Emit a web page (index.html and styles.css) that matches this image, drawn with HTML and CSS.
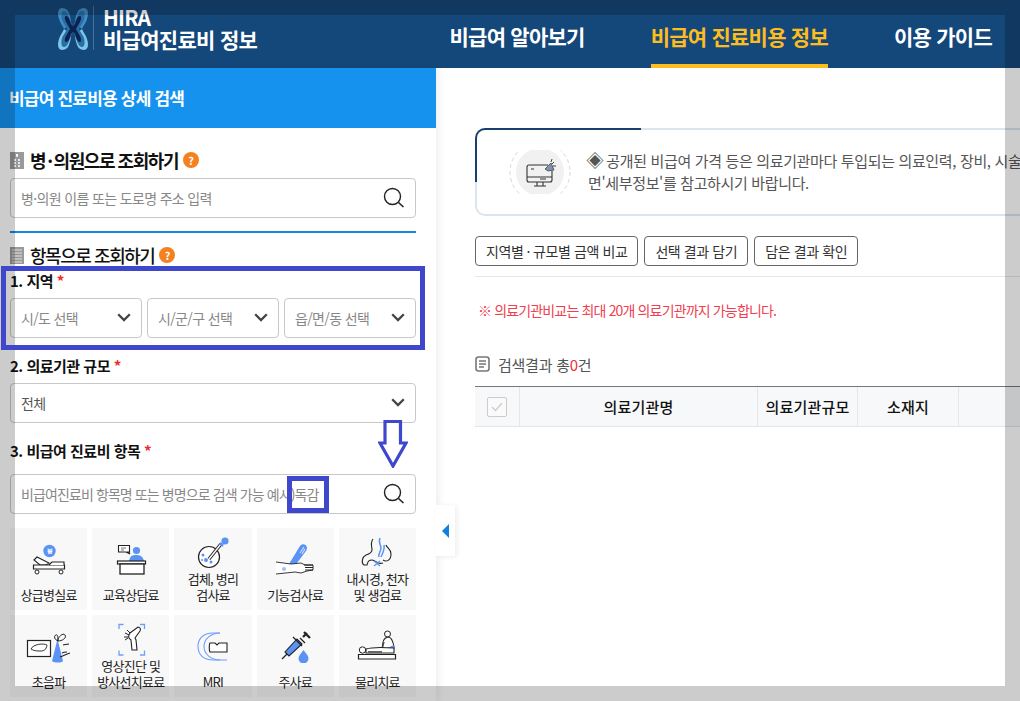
FILE: index.html
```html
<!DOCTYPE html>
<html lang="ko">
<head>
<meta charset="utf-8">
<title>HIRA 비급여진료비 정보</title>
<link rel="stylesheet" href="styles.css">
</head>
<body>
<div class="page">
  <header class="header">
    <div class="brand">
      <svg class="brand-logo" viewBox="0 0 30 44" width="30" height="44">
        <g id="lobes">
          <path d="M4 1C0 1-1 6 1 12c1 4 4 7 5 10 2-2 4-2 6-4 2-3 0-10-2-14C9 2 6 1 4 1Z" fill="#3f8fc4"/>
          <path d="M26 1c4 0 5 5 3 11-1 4-4 7-5 10-2-2-4-2-6-4-2-3 0-10 2-14 1-2 4-3 6-3Z" fill="#3f8fc4"/>
          <path d="M4 43c-4 0-5-5-3-11 1-4 4-7 5-10 2 2 4 2 6 4 2 3 0 10-2 14-1 2-4 3-6 3Z" fill="#7cc6e8"/>
          <path d="M26 43c4 0 5-5 3-11-1-4-4-7-5-10-2 2-4 2-6 4-2 3 0 10 2 14 1 2 4 3 6 3Z" fill="#7cc6e8"/>
          <path d="M6 4c-3 0-3 5-2 9 1 3 4 6 5 9-1 3-4 6-5 9-1 4-1 9 2 9 3 0 5-5 6-9l3-6 3 6c1 4 3 9 6 9s3-5 2-9c-1-3-4-6-5-9 1-3 4-6 5-9 1-4 1-9-2-9-3 0-5 5-6 9l-3 6-3-6C11 9 9 4 6 4Z" fill="#2a6ea6"/>
          <path d="M8 9c-2 0-1 4 0 6l4 7-4 7c-1 2-2 6 0 6 3 0 4-5 5-8l2-2 2 2c1 3 2 8 5 8 2 0 1-4 0-6l-4-7 4-7c1-2 2-6 0-6-3 0-4 5-5 8l-2 2-2-2C12 14 11 9 8 9Z" fill="#0b2350"/>
        </g>
      </svg>
      <div class="brand-text">
        <span class="brand-top">HIRA</span>
        <span class="brand-name">비급여진료비 정보</span>
      </div>
    </div>
    <nav class="nav">
      <a class="nav-item">비급여 알아보기</a>
      <a class="nav-item is-active">비급여 진료비용 정보</a>
      <a class="nav-item">이용 가이드</a>
    </nav>
  </header>

  <div class="content">
    <aside class="side">
      <h2 class="side-head">비급여 진료비용 상세 검색</h2>
      <div class="side-body">
        <h3 class="sec-title sec-first">
          <svg class="sec-icon" viewBox="0 0 14 17" width="14" height="17"><rect width="14" height="17" fill="#9a9a9a"/><path d="M6 3h2M7 2v3M4 8h2M8 8h2M4 11h2M8 11h2M4 14h2M8 14h2" stroke="#fff" stroke-width="1.4"/></svg>
          <span>병<span class="dot">·</span>의원으로 조회하기</span>
          <span class="help">?</span>
        </h3>
        <div class="field field-search">
          <span class="ph">병·의원 이름 또는 도로명 주소 입력</span>
          <svg class="search" viewBox="0 0 22 22" width="22" height="22"><circle cx="9.5" cy="9.5" r="8" fill="none" stroke="#222" stroke-width="1.4"/><path d="M15.5 15.5l5 4.5" stroke="#222" stroke-width="1.6"/></svg>
        </div>
        <div class="rule"></div>
        <h3 class="sec-title sec-second">
          <svg class="sec-icon" viewBox="0 0 14 17" width="14" height="17"><rect width="14" height="17" fill="#9a9a9a"/><path d="M2 3h10M2 6h10M2 9h10M2 12h10M2 15h10" stroke="#e2e2e2" stroke-width="1.2"/></svg>
          <span>항목으로 조회하기</span>
          <span class="help">?</span>
        </h3>

        <div class="label label-first">1. 지역 <em>*</em></div>
        <div class="select-row">
          <div class="field field-select"><span class="ph">시/도 선택</span><svg class="chev" viewBox="0 0 14 9" width="14" height="9"><path d="M1.2 1.2 7 7l5.8-5.8" fill="none" stroke="#444" stroke-width="2.3"/></svg></div>
          <div class="field field-select"><span class="ph">시/군/구 선택</span><svg class="chev" viewBox="0 0 14 9" width="14" height="9"><path d="M1.2 1.2 7 7l5.8-5.8" fill="none" stroke="#444" stroke-width="2.3"/></svg></div>
          <div class="field field-select"><span class="ph">읍/면/동 선택</span><svg class="chev" viewBox="0 0 14 9" width="14" height="9"><path d="M1.2 1.2 7 7l5.8-5.8" fill="none" stroke="#444" stroke-width="2.3"/></svg></div>
        </div>

        <div class="label">2. 의료기관 규모 <em>*</em></div>
        <div class="field field-select field-gap"><span class="val">전체</span><svg class="chev" viewBox="0 0 14 9" width="14" height="9"><path d="M1.2 1.2 7 7l5.8-5.8" fill="none" stroke="#444" stroke-width="2.3"/></svg></div>

        <div class="label">3. 비급여 진료비 항목 <em>*</em></div>
        <div class="field field-search field-gap-lg">
          <span class="ph ph-tight">비급여진료비 항목명 또는 병명으로 검색 가능 예시)독감</span>
          <svg class="search" viewBox="0 0 22 22" width="22" height="22"><circle cx="9.5" cy="9.5" r="8" fill="none" stroke="#222" stroke-width="1.4"/><path d="M15.5 15.5l5 4.5" stroke="#222" stroke-width="1.6"/></svg>
        </div>

        <div class="tiles">
          <div class="tile">
            <svg class="tile-icon" viewBox="0 0 48 44" width="48" height="44">
              <circle cx="24.5" cy="19" r="6.2" fill="#5b93f5"/><text x="24.5" y="21.6" class="won">₩</text>
              <path d="M9 28l3-3 12 6-3 2h-6z" fill="#fff" stroke="#222" stroke-width="1.1"/>
              <path d="M8.5 33h31v4h-31z" fill="#fff" stroke="#222" stroke-width="1.2"/><path d="M24 33l3-3h12v3" fill="#fff" stroke="#222" stroke-width="1.1"/>
              <circle cx="12" cy="40" r="2" fill="#fff" stroke="#222"/><circle cx="36" cy="40" r="2" fill="#fff" stroke="#222"/>
            </svg>
            <span>상급병실료</span>
          </div>
          <div class="tile">
            <svg class="tile-icon" viewBox="0 0 48 44" width="48" height="44">
              <path d="M11.500 13.500h11v6.500h-1.500l2 2-4-2h-7.500z" fill="#fff" stroke="#222" stroke-width="1.1"/><path d="M14 16h5M14 18h3" stroke="#777"/>
              <circle cx="29.500" cy="18.500" r="3.600" fill="#5b93f5"/><path d="M22 29c1-4 2-6 7-6 5 0 7 2 8 6z" fill="#5b93f5"/>
              <rect x="10.500" y="29" width="28" height="3" fill="#fff" stroke="#222" stroke-width="1.2"/><rect x="13" y="32" width="24" height="10" fill="#fff" stroke="#222" stroke-width="1.3"/>
            </svg>
            <span>교육상담료</span>
          </div>
          <div class="tile">
            <svg class="tile-icon" viewBox="0 0 48 44" width="48" height="44">
              <circle cx="20" cy="25" r="10.500" fill="#fff" stroke="#222" stroke-width="1.2"/>
              <circle cx="14" cy="23" r="1.500" fill="#5b93f5"/><circle cx="17" cy="28" r="2" fill="#5b93f5"/><circle cx="22" cy="30" r="1.500" fill="#5b93f5"/><circle cx="13" cy="28" r="1" fill="#5b93f5"/>
              <path d="M20 27l12-15" stroke="#222" stroke-width="3.400"/><path d="M20 27l12-15" stroke="#fff" stroke-width="1.400"/>
              <circle cx="36" cy="9" r="3.600" fill="#5b93f5"/><path d="M31 11l3 3" stroke="#5b93f5" stroke-width="2.500"/>
            </svg>
            <span>검체, 병리<br>검사료</span>
          </div>
          <div class="tile">
            <svg class="tile-icon" viewBox="0 0 48 44" width="48" height="44">
              <path d="M18 32l11-18c2-3 7-2 7 2 0 1-1 3-1 3L23 35z" fill="#5b93f5"/><path d="M29 21l4-6M31 22l3-5" stroke="#cfe0ff" stroke-width="1.100"/>
              <path d="M5 30l15 2 10-1 4 2h8v5l-6 1-6 2-6-1-19 2" fill="#fff" stroke="#222" stroke-width=".9"/>
              <path d="M33 33h9M34 35.500h8M34 38h8" stroke="#222" stroke-width="1.200"/><circle cx="13" cy="37" r="2" fill="#9cc0fb"/>
            </svg>
            <span>기능검사료</span>
          </div>
          <div class="tile">
            <svg class="tile-icon" viewBox="0 0 48 44" width="48" height="44">
              <path d="M20 7c-3 4-1 8-1 11 0 3-3 4-6 5-4 2-5 8-2 10M30 28c3 2 8 1 8-6 0-5-4-6-5-9" fill="none" stroke="#222" stroke-width="1.100"/>
              <path d="M11 33l3 0c1-5 3-5 5-5 4 0 5 5 11 3" fill="none" stroke="#222" stroke-width="1.100"/>
              <path d="M27 6c-2 4 1 7 1 10 0 4-3 5-2 9M31 13c1 4-1 8-3 12" fill="none" stroke="#5b93f5" stroke-width="1.500"/>
              <path d="M21 29l6 5M27 29l-6 5" stroke="#5b93f5" stroke-width="1.200"/>
            </svg>
            <span>내시경, 천자<br>및 생검료</span>
          </div>
          <div class="tile">
            <svg class="tile-icon" viewBox="0 0 48 44" width="48" height="44">
              <rect x="2.500" y="21.500" width="23" height="16" fill="#fff" stroke="#222" stroke-width="1.200"/><path d="M6 30c2-5 13-6 16-4-1 5-3 6-6 6-4 0-7 0-10-2z" fill="none" stroke="#333"/>
              <path d="M32 22h1l5 20c-1 2-9 2-11 0z" fill="#5b93f5"/>
              <path d="M33 22c-1-3 5-9 7-6 2 3-3 6-7 6zM33 22c-3-1-5-5-2-6 2-1 2 3 2 6" fill="none" stroke="#222"/>
              <path d="M38 26c2 0 3-1 6-1M35 38c3-1 6-3 10-4M37 34c2-1 3-1 5-1" fill="none" stroke="#222" stroke-width="1.100"/>
            </svg>
            <span>초음파</span>
          </div>
          <div class="tile">
            <svg class="tile-icon" viewBox="0 0 48 44" width="48" height="44">
              <path d="M12 10V5.500h4.500M33 5.500h4.500V10M12 31.500V36h4.500M33 36h4.500v-4.500" fill="none" stroke="#6f9ef8" stroke-width="1.300"/>
              <path d="M23 14l8-6c2 0 3 2 2 4l-5 7 1 2 1 10h-5l-1-10c-3-2-3-4-1-7z" fill="#fff" stroke="#222" stroke-width="1.100"/>
              <path d="M18 14l4 2M17 18l4 0M20 11l3 3M18 21l3-2" stroke="#222"/>
            </svg>
            <span>영상진단 및<br>방사선치료료</span>
          </div>
          <div class="tile">
            <svg class="tile-icon" viewBox="0 0 48 44" width="48" height="44">
              <path d="M31 14H24C14 14 9 20 9 27.500S14 41 24 41h14" fill="none" stroke="#6f9ef8" stroke-width="1.100"/>
              <path d="M31 14c-9 0-16 6-16 13.500S22 41 31 41" fill="none" stroke="#6f9ef8" stroke-width="1.100"/>
              <path d="M38 24H30l-2 2-2-2h-5c-1 1-1 8 0 9h17z" fill="#fff" stroke="#222" stroke-width="1.100"/>
            </svg>
            <span>MRI</span>
          </div>
          <div class="tile">
            <svg class="tile-icon" viewBox="0 0 48 44" width="48" height="44">
              <path d="M11 40l6-6" stroke="#222" stroke-width="1.200"/><path d="M16 35l-2-2 12-13 5 5-13 12z" fill="#5b93f5" stroke="#222" stroke-width="1.100"/>
              <path d="M22 18l9 9M29 19l5 5" stroke="#222" stroke-width="1.300"/><path d="M33 13l6 6M32 18l4-4" stroke="#222" stroke-width="2.300"/>
              <path d="M32.500 31c3 4 5 6 5 8.500a5 5 0 0 1-10 0c0-2.500 2-4.500 5-8.500z" fill="#5b93f5"/>
            </svg>
            <span>주사료</span>
          </div>
          <div class="tile">
            <svg class="tile-icon" viewBox="0 0 48 44" width="48" height="44">
              <circle cx="34.500" cy="15" r="3" fill="#fff" stroke="#222"/>
              <path d="M30 30c-1-6 0-11 5-12 3 0 5 4 6 10z" fill="#fff" stroke="#222" stroke-width="1.100"/><path d="M36 29c3-3 5-3 6-1l-1 3h-5z" fill="#5b93f5"/>
              <path d="M25 32c3-2 6-6 6-9" fill="none" stroke="#222"/>
              <circle cx="9.500" cy="31" r="3.200" fill="#fff" stroke="#222"/>
              <path d="M13 30c6-2 14-2 28-1v5H13z" fill="#fff" stroke="#222" stroke-width="1.100"/><path d="M15 33h14" stroke="#666" stroke-width="2"/>
              <path d="M5.500 35.500h37v4.500h-37z" fill="#fff" stroke="#222" stroke-width="1.200"/>
            </svg>
            <span>물리치료</span>
          </div>
        </div>
      </div>
    </aside>

    <main class="main">
      <div class="main-inner">
        <section class="notice">
          <svg class="notice-icon" viewBox="0 0 64 44" width="64" height="44">
            <circle cx="32" cy="22" r="30" fill="none" stroke="#d9d9d9" stroke-dasharray="4 3"/>
            <circle cx="32" cy="22" r="24" fill="#f1f1f1"/>
            <path d="M40 15H21a2 2 0 0 0-2 2v13a2 2 0 0 0 2 2h21a2 2 0 0 0 2-2v-9M19 27h25M29 32v4M35 32v4M26 36h12" fill="none" stroke="#333" stroke-width="1.100"/>
            <path d="M23 19h3M32 29h6" stroke="#333"/>
            <path d="M37 19l6-6 3 7-6 1z" fill="#7f93b0" stroke="#444" stroke-width=".8"/><path d="M46 12l-2 2M48 16l-3 0M44 9l-1 3" stroke="#444"/>
          </svg>
          <p class="notice-text">
            <span class="notice-line"><span class="diamond">◈</span> 공개된 비급여 가격 등은 의료기관마다 투입되는 의료인력, 장비, 시술 시간 등의 차이가 있을 수 있으므로 자세한 내용은 의료기관명을 선택하시</span>
            <span class="notice-line">면'세부정보'를 참고하시기 바랍니다.</span>
          </p>
        </section>

        <div class="actions">
          <button class="btn">지역별<span class="dot-wide">·</span>규모별 금액 비교</button>
          <button class="btn">선택 결과 담기</button>
          <button class="btn">담은 결과 확인</button>
        </div>

        <p class="warn">※ 의료기관비교는 최대 20개 의료기관까지 가능합니다.</p>

        <div class="result">
          <svg viewBox="0 0 15 16" width="15" height="16"><rect x="1" y="1" width="13" height="14" rx="2.500" fill="none" stroke="#777" stroke-width="1.600"/><path d="M4 5h7M4 8h7M4 11h5" stroke="#777" stroke-width="1.400"/></svg>
          <span>검색결과 총<b>0</b>건</span>
        </div>

        <div class="thead">
          <div class="th"><span class="check"><svg viewBox="0 0 12 10" width="12" height="10"><path d="M1 5l3.500 3.500L11 1" fill="none" stroke="#ccc" stroke-width="1.200"/></svg></span></div>
          <div class="th">의료기관명</div>
          <div class="th">의료기관규모</div>
          <div class="th">소재지</div>
          <div class="th"></div>
        </div>
      </div>
    </main>
  </div>

  <button class="toggle" aria-label="접기"></button>
  <div class="frame"></div>
  <div class="mark mark-region"></div>
  <div class="mark mark-word"></div>
  <svg class="mark-arrow" viewBox="0 0 30 48" width="30" height="48"><path d="M7 1.500h15.500V23H28L15 46 2 23h5z" fill="none" stroke="#3f48cc" stroke-width="3.200"/></svg>
</div>
</body>
</html>
```
FILE: styles.css
```css
* { box-sizing: border-box; }
html, body { margin: 0; padding: 0; height: 100%; overflow: hidden; background: #fff; }
body {
  font-family: "Noto Sans CJK KR", "Noto Sans", sans-serif;
  color: #111;
}
.page { position: relative; width: 1020px; height: 701px; overflow: hidden; display: flex; flex-direction: column; }

/* header */
.header { flex: 0 0 68px; background: #14477a; display: flex; align-items: stretch; color: #fff; padding: 0 28px 0 58px; }
.brand { display: flex; align-items: flex-start; padding-top: 6px; }
.brand-logo { margin-top: 1px; flex: none; }
.brand-text { margin-left: 5px; padding-left: 9px; border-left: 1px solid #4a7199; height: 44px; display: flex; flex-direction: column; line-height: 1; }
.brand-top { font-size: 21px; font-weight: 700; letter-spacing: -.8px; line-height: 22px; }
.brand-name { font-size: 21px; font-weight: 700; letter-spacing: -.7px; line-height: 23px; }
.nav { margin-left: auto; display: flex; gap: 66px; }
.nav-item { height: 68px; padding-top: 18px; font-size: 21px; font-weight: 700; letter-spacing: -.75px; line-height: 36px; color: #fff; border-bottom: 4px solid transparent; }
.nav-item.is-active { color: #fdbd20; border-bottom-color: #fdbd20; }

.content { flex: 1; display: flex; min-height: 0; }

/* sidebar */
.side { flex: 0 0 436px; background: #fff; box-shadow: 2px 0 8px rgba(0,0,0,.08); position: relative; overflow: hidden; }
.side-head { margin: 0; height: 60px; background: #1492ee; color: #fff; font-size: 17px; font-weight: 700; letter-spacing: -.8px; line-height: 60px; padding-left: 9px; }
.side-body { padding: 18px 20px 0 10px; }
.sec-title { margin: 0; height: 28px; display: flex; align-items: center; font-size: 18px; font-weight: 700; letter-spacing: -1.45px; color: #111; }
.sec-second { margin-top: 8px; font-weight: 500; }
.sec-icon { margin-right: 6px; flex: none; }
.dot { padding: 0 2px; }
.dot-wide { padding: 0 3px; }
.help { width: 16px; height: 16px; margin-left: 5px; border-radius: 50%; background: #f58020; color: #fff; font-size: 11px; font-weight: 700; line-height: 16px; text-align: center; letter-spacing: 0; }
.field { height: 40px; border: 1px solid #c8c8c8; border-radius: 4px; background: #fff; display: flex; align-items: center; justify-content: space-between; padding: 0 10px; margin-top: 4px; font-size: 14px; letter-spacing: -.65px; white-space: nowrap; }
.field-gap { margin-top: 6px; }
.field-gap-lg { margin-top: 12px; }
.ph { color: #888; }
.ph-tight { letter-spacing: -.9px; }
.val { color: #555; }
.search { flex: none; }
.chev { flex: none; margin: -2px 0 0; }
.rule { height: 2px; margin-top: 13px; background: #1487e3; }
.label { height: 22px; margin-top: 17px; font-size: 15px; font-weight: 700; letter-spacing: -.5px; line-height: 22px; color: #111; }
.label-first { margin-top: 1px; }
.label em { color: #ee2b2b; font-style: normal; }
.select-row { display: grid; grid-template-columns: repeat(3, 1fr); gap: 5px; margin-top: 6px; }
.select-row .field { margin-top: 0; }

.tiles { display: grid; grid-template-columns: repeat(5, 1fr); grid-auto-rows: 82px; gap: 5px; margin-top: 14px; }
.tile { background: #f8f8f8; position: relative; display: flex; flex-direction: column; align-items: center; justify-content: flex-end; padding-bottom: 7px; text-align: center; font-size: 13px; letter-spacing: -.75px; line-height: 16px; color: #222; }
.tile-icon { position: absolute; top: 4px; left: 50%; margin-left: -24px; }
.won { font-size: 8px; font-weight: 700; fill: #fff; text-anchor: middle; }

/* main */
.main { flex: 1; min-width: 0; overflow: hidden; padding: 60px 0 0 39px; }
.main-inner { width: 900px; }
.notice { position: relative; height: 88px; border: 2px solid #dde5ec; border-radius: 10px; display: flex; align-items: center; padding: 0 0 0 31px; }
.notice::before { content: ""; position: absolute; left: -2px; top: -2px; width: 164px; height: 52px; border-top: 2px solid #16406f; border-left: 2px solid #16406f; border-top-left-radius: 10px; }
.notice-icon { flex: none; overflow: hidden; }
.notice-text { margin: 0 0 0 16px; font-size: 15px; letter-spacing: -.35px; line-height: 22px; color: #555; }
.notice-line { display: block; white-space: nowrap; }
.diamond { font-size: 18px; line-height: 18px; margin-left: -2px; letter-spacing: -1.5px; }
.actions { display: flex; gap: 6px; margin-top: 20px; padding-bottom: 10px; border-bottom: 1px solid #e6e6e6; height: 41px; }
.btn { height: 30px; padding: 0 10px; background: #fff; border: 1px solid #666; border-radius: 4px; font: 400 14px/28px "Noto Sans CJK KR", sans-serif; letter-spacing: -.4px; color: #333; }
.warn { margin: 23px 0 0 3px; height: 20px; font-size: 14px; letter-spacing: -.85px; line-height: 20px; color: #f0404f; }
.result { display: flex; align-items: center; gap: 8px; margin-top: 33px; height: 22px; font-size: 15px; letter-spacing: -.25px; color: #555; }
.result b { color: #f0303a; font-weight: 400; }
.thead { display: grid; grid-template-columns: 45px 238px 100px 101px 1fr; height: 41px; margin-top: 11px; border-top: 1px solid #777; border-bottom: 1px solid #e4e4e4; background: #f7f8fa; }
.th { display: flex; align-items: center; justify-content: center; font-size: 15px; font-weight: 500; letter-spacing: .2px; color: #111; border-right: 1px solid #e6e6e6; }
.check { width: 20px; height: 20px; border: 1px solid #ccc; border-radius: 2px; background: #fafafa; display: flex; align-items: center; justify-content: center; }

/* overlays */
.toggle { position: absolute; left: 436px; top: 505px; width: 19px; height: 51px; padding: 0; border: 0; background: #fff; box-shadow: 2px 1px 5px rgba(0,0,0,.07); }
.toggle::before { content: ""; position: absolute; left: 6px; top: 19px; border-style: solid; border-width: 7px 7px 7px 0; border-color: transparent #0f7fe0 transparent transparent; }
.frame { position: absolute; inset: 0; border-width: 15px; border-style: solid; border-color: rgba(0,0,0,.2); pointer-events: none; }
.mark { position: absolute; border: 5px solid #3f48cc; pointer-events: none; }
.mark-region { left: 1px; top: 266px; width: 424px; height: 84px; }
.mark-word { left: 287px; top: 476px; width: 42px; height: 37px; }
.mark-arrow { position: absolute; left: 378px; top: 420px; }
```
